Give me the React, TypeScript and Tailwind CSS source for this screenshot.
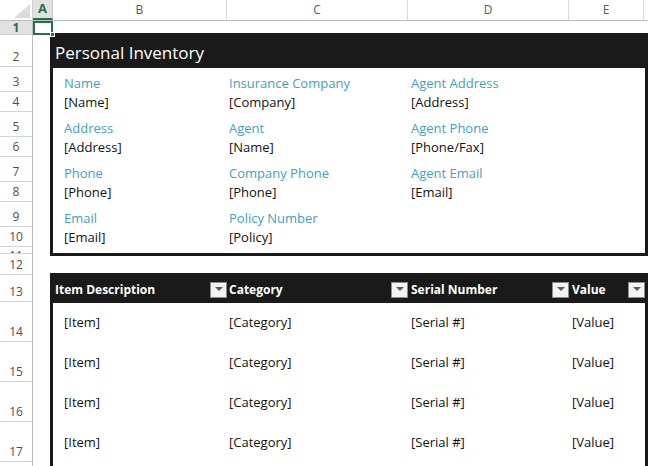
import React from 'react'

const rowHeights: [string, number][] = [
    ['1', 14],
    ['2', 32],
    ['3', 25],
    ['4', 20],
    ['5', 25],
    ['6', 20],
    ['7', 25],
    ['8', 20],
    ['9', 25],
    ['10', 20],
    ['11', 7],
    ['12', 21],
    ['13', 27],
    ['14', 40],
    ['15', 40],
    ['16', 40],
    ['17', 40],
    ['18', 30],
]

const infoColumns = [
    {
        pad: 'pl-[11px]',
        width: 'w-[174px]',
        fields: [
            ['Name', '[Name]'],
            ['Address', '[Address]'],
            ['Phone', '[Phone]'],
            ['Email', '[Email]'],
        ],
    },
    {
        pad: 'pl-[2px]',
        width: 'w-[181px]',
        fields: [
            ['Insurance Company', '[Company]'],
            ['Agent', '[Name]'],
            ['Company Phone', '[Phone]'],
            ['Policy Number', '[Policy]'],
        ],
    },
    {
        pad: 'pl-[3px]',
        width: 'flex-1',
        fields: [
            ['Agent Address', '[Address]'],
            ['Agent Phone', '[Phone/Fax]'],
            ['Agent Email', '[Email]'],
        ],
    },
]

const tableCols = [
    { title: 'Item Description', width: 'w-[174px]', headPad: 'pl-[2px]', cellPad: 'pl-[11px]', value: '[Item]' },
    { title: 'Category', width: 'w-[181px]', headPad: 'pl-[2px]', cellPad: 'pl-[2px]', value: '[Category]' },
    { title: 'Serial Number', width: 'w-[161px]', headPad: 'pl-[3px]', cellPad: 'pl-[3px]', value: '[Serial #]' },
    { title: 'Value', width: 'flex-1', headPad: 'pl-[3px]', cellPad: 'pl-[3px]', value: '[Value]' },
]

function FilterButton() {
    return (
        <div className="w-[17px] h-[16px] bg-[#f3f3f3] border border-[#8c8c8c] flex items-center justify-center shrink-0">
            <svg width="8" height="5" viewBox="0 0 8 5">
                <polygon points="0,0 8,0 4,4" fill="#5a5a5a" />
            </svg>
        </div>
    )
}

export default function App() {
    return (
        <div
            className="w-[648px] h-[466px] overflow-hidden bg-white relative"
            style={{ fontFamily: '"Open Sans", "Noto Sans", sans-serif' }}
        >
            {/* column headers */}
            <div className="flex h-[21px] border-b border-[#bcbcbc] text-[12px] text-[#5b5b5b]">
                <div className="w-[33px] border-r border-[#d4d4d4] relative">
                    <svg className="absolute right-[2px] bottom-[2px]" width="16" height="14" viewBox="0 0 16 14">
                        <polygon points="16,0 16,14 0,14" fill="#dcdcdc" />
                    </svg>
                </div>
                <div className="w-[20px] bg-[#e1e1e1] border-r border-[#c6c6c6] border-b-2 border-b-[#217346] flex items-center justify-center text-[#217346] font-bold text-[13px]">
                    A
                </div>
                <div className="w-[174px] border-r border-[#d9d9d9] flex items-center justify-center">B</div>
                <div className="w-[181px] border-r border-[#d9d9d9] flex items-center justify-center">C</div>
                <div className="w-[161px] border-r border-[#d9d9d9] flex items-center justify-center">D</div>
                <div className="w-[75px] border-r border-[#d9d9d9] flex items-center justify-center">E</div>
            </div>

            <div className="flex">
                {/* row headers */}
                <div className="w-[33px] border-r border-[#bcbcbc] text-[12px] text-[#4f4f4f] shrink-0">
                    {rowHeights.map(([n, h]) => (
                        <div
                            key={n}
                            style={{ height: h }}
                            className={
                                n === '1'
                                    ? 'box-border border-b border-[#d4d4d4] bg-[#e1e1e1] text-[#217346] font-bold flex items-end justify-center leading-[13px] overflow-hidden'
                                    : n === '11'
                                      ? 'box-border border-b border-[#d4d4d4] flex items-start justify-center pt-[3px] leading-[12px] overflow-hidden'
                                      : 'box-border border-b border-[#d4d4d4] flex items-end justify-center pb-[1px] leading-[16px] overflow-hidden'
                            }
                        >
                            {n === '18' ? <span className="translate-y-[20px]">{n}</span> : n}
                        </div>
                    ))}
                </div>

                {/* sheet */}
                <div className="flex-1 relative pt-[12px]">
                    {/* selected cell A1 */}
                    <div className="absolute left-0 top-0 w-[20px] h-[14px] border-2 border-[#217346]">
                        <div className="absolute -right-[4px] -bottom-[4px] w-[5px] h-[5px] bg-[#217346] border border-white" />
                    </div>

                    {/* info panel */}
                    <div className="ml-[17px] w-[598px] border-[3px] border-[#1a1a1a] text-[13px]">
                        <div className="h-[32px] bg-[#1a1a1a] text-white text-[17px] pl-[2px] flex items-center pt-[2px]">
                            Personal Inventory
                        </div>
                        <div className="flex pb-[6px]">
                            {infoColumns.map((col, ci) => (
                                <div key={ci} className={`${col.width} ${col.pad} shrink-0`}>
                                    {col.fields.map(([label, value], fi) => (
                                        <div key={label}>
                                            <div
                                                className={`${fi === 0 ? 'h-[24px]' : 'h-[25px]'} flex items-end leading-[17px] text-[#3f9fc4]`}
                                            >
                                                {label}
                                            </div>
                                            <div className="h-[20px] flex items-center leading-[17px] text-[#111]">{value}</div>
                                        </div>
                                    ))}
                                </div>
                            ))}
                        </div>
                    </div>

                    {/* inventory table */}
                    <div className="ml-[17px] mt-[17px] w-[598px] border-[3px] border-b-0 border-[#1a1a1a] text-[13px]">
                        <div className="h-[27px] bg-[#1a1a1a] text-white font-bold text-[12px] flex">
                            {tableCols.map((c) => (
                                <div key={c.title} className={`${c.width} ${c.headPad} flex items-center justify-between shrink-0`}>
                                    <span>{c.title}</span>
                                    <FilterButton />
                                </div>
                            ))}
                        </div>
                        {[0, 1, 2, 3, 4].map((r) => (
                            <div key={r} className="h-[40px] flex text-[#111]">
                                {tableCols.map((c) => (
                                    <div key={c.title} className={`${c.width} ${c.cellPad} flex items-center shrink-0`}>
                                        {r < 4 ? c.value : ''}
                                    </div>
                                ))}
                            </div>
                        ))}
                    </div>
                </div>
            </div>
        </div>
    )
}
